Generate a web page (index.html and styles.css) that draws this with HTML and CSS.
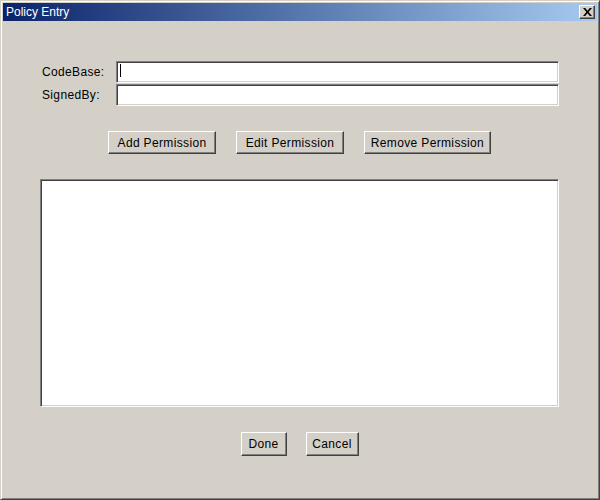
FILE: index.html
```html
<!DOCTYPE html>
<html lang="en">
<head>
  <meta charset="UTF-8">
  <title>Policy Entry</title>
  <link rel="stylesheet" href="styles.css">
</head>
<body>
  <div class="window">
    <div class="titlebar">
      <span class="title">Policy Entry</span>
      <button class="close-btn" type="button">
        <svg width="9" height="8" viewBox="0 0 9 8"><path d="M0 0h2.2l2.3 2.7L6.8 0H9L5.6 4 9 8H6.8L4.5 5.3 2.2 8H0l3.4-4z" fill="#000"/></svg>
      </button>
    </div>

    <div class="content">
      <div class="form-row">
        <label for="codebase">CodeBase:</label>
        <div class="field"><input type="text" id="codebase"><span class="caret"></span></div>
      </div>
      <div class="form-row">
        <label for="signedby">SignedBy:</label>
        <div class="field"><input type="text" id="signedby"></div>
      </div>

      <div class="btn-row perm-row">
        <button type="button" class="btn btn-wide">Add Permission</button>
        <button type="button" class="btn btn-wide">Edit Permission</button>
        <button type="button" class="btn btn-remove">Remove Permission</button>
      </div>

      <div class="list"></div>

      <div class="btn-row bottom-row">
        <button type="button" class="btn btn-done">Done</button>
        <button type="button" class="btn btn-cancel">Cancel</button>
      </div>
    </div>
  </div>
</body>
</html>
```

FILE: styles.css
```css
* {
  box-sizing: border-box;
}
body {
  margin: 0;
  font-family: "Liberation Sans", Arial, sans-serif;
  font-size: 12px;
  letter-spacing: 0.35px;
  color: #000;
  background-color: #d4d0c8;
}
.window {
  width: 600px;
  height: 500px;
  background-color: #d4d0c8;
  border: 1px solid;
  border-color: #d4d0c8 #404040 #404040 #d4d0c8;
  box-shadow: inset 1px 1px #fff, inset -1px -1px #808080;
  padding: 2px;
}
.titlebar {
  height: 18px;
  display: flex;
  align-items: center;
  justify-content: space-between;
  padding: 0 2px 0 3px;
  background: linear-gradient(to right, #0a246a, #a6caf0);
  color: #fff;
}
.title {
  font-size: 12px;
  line-height: 18px;
  letter-spacing: 0;
}
.close-btn {
  width: 16px;
  height: 14px;
  padding: 0;
  display: flex;
  align-items: center;
  justify-content: center;
  background-color: #d4d0c8;
  border: 1px solid;
  border-color: #fff #404040 #404040 #fff;
  box-shadow: inset -1px -1px #808080;
}
.content {
  padding: 40px 38px 0 37px;
}
.form-row {
  display: flex;
  align-items: center;
  height: 22px;
  margin-bottom: 1px;
}
.form-row label {
  width: 76px;
  padding-left: 2px;
}
.field {
  position: relative;
  flex: 1;
  height: 22px;
}
.field input {
  width: 100%;
  height: 100%;
  margin: 0;
  padding: 0 3px;
  border: 1px solid;
  border-color: #808080 #fff #fff #808080;
  box-shadow: inset 1px 1px #404040, inset -1px -1px #d4d0c8;
  background-color: #fff;
  font: inherit;
  outline: none;
}
.caret {
  position: absolute;
  left: 4px;
  top: 3px;
  width: 1px;
  height: 13px;
  background-color: #000;
}
.btn-row {
  display: flex;
  justify-content: center;
}
.perm-row {
  gap: 20px;
  margin-top: 25px;
}
.btn {
  height: 23px;
  padding: 0;
  font: inherit;
  letter-spacing: inherit;
  color: #000;
  background-color: #d4d0c8;
  border: 1px solid;
  border-color: #fff #404040 #404040 #fff;
  box-shadow: inset -1px -1px #808080;
}
.btn-wide {
  width: 108px;
}
.btn-remove {
  width: 127px;
}
.list {
  height: 228px;
  margin-top: 25px;
  background-color: #fff;
  border: 1px solid;
  border-color: #808080 #fff #fff #808080;
  box-shadow: inset 1px 1px #404040, inset -1px -1px #d4d0c8;
}
.bottom-row {
  gap: 19px;
  margin-top: 25px;
}
.btn-done {
  width: 46px;
  height: 24px;
}
.btn-cancel {
  width: 53px;
  height: 24px;
}
```
